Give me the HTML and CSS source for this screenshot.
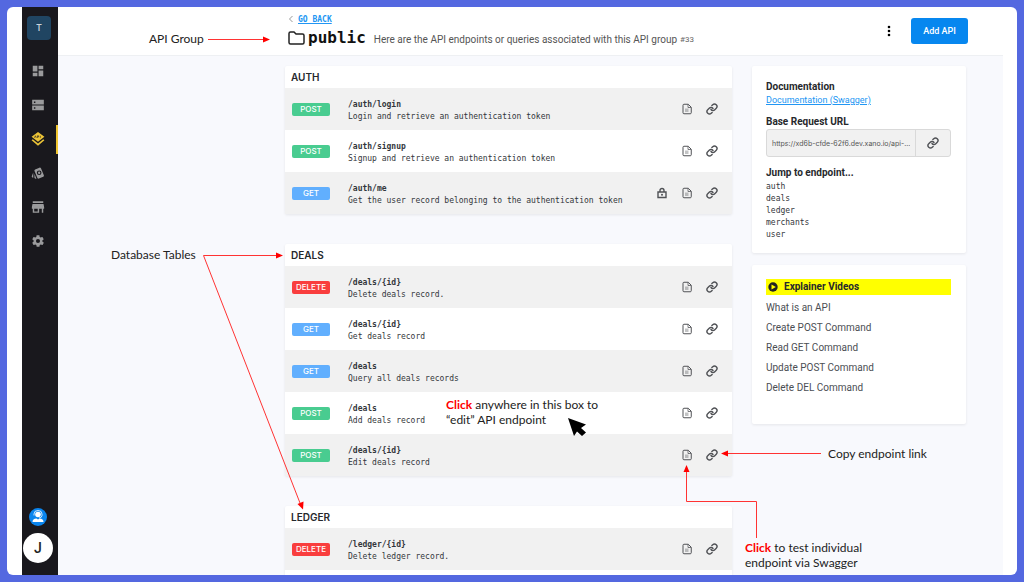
FILE: index.html
```html
<!DOCTYPE html>
<html lang="en">
<head>
  <meta charset="UTF-8">
  <title>API Group - public</title>
  <link rel="stylesheet" href="styles.css">
</head>
<body>

  <!-- shared icons -->
  <svg class="defs" width="0" height="0">
    <symbol id="doc" viewBox="0 0 24 24">
      <path d="M4 4.500Q4 2.500 6 2.500h8.500l6 6V19.500q0 2-2 2H6q-2 0-2-2z" fill="none" stroke="currentColor" stroke-width="2"/>
      <path d="M14 3v6h6" fill="none" stroke="currentColor" stroke-width="1.500"/>
      <path d="M8 11h7v7H8z" fill="currentColor" opacity="0.350"/>
    </symbol>
    <symbol id="link" viewBox="0 0 24 24">
      <g fill="none" stroke="currentColor" stroke-width="2.800" stroke-linecap="round" stroke-linejoin="round">
        <path d="M10 13a5 5 0 0 0 7.540.540l3-3a5 5 0 0 0-7.070-7.070l-1.720 1.710"/>
        <path d="M14 11a5 5 0 0 0-7.540-.540l-3 3a5 5 0 0 0 7.070 7.070l1.710-1.710"/>
      </g>
    </symbol>
    <symbol id="lock" viewBox="0 0 24 24">
      <path d="M4 10h16v11H4zM8 10V7a4 4 0 0 1 8 0v3" fill="none" stroke="currentColor" stroke-width="2.800"/>
      <circle cx="12" cy="15.500" r="2" fill="currentColor"/>
    </symbol>
  </svg>

  <div class="frame">
    <nav class="sidebar">
      <button class="workspace">T</button>
      <a class="nav-item" href="#" aria-label="Dashboard">
        <svg viewBox="0 0 24 24"><path d="M3 13h8V3H3v10zm0 8h8v-6H3v6zm10 0h8V11h-8v10zm0-18v6h8V3h-8z"/></svg>
      </a>
      <a class="nav-item" href="#" aria-label="Database">
        <svg viewBox="0 0 24 24"><path fill-rule="evenodd" d="M2 3h20v8H2zM2 13h20v8H2zM5 6v2.500h2.500V6zM5 16v2.500h2.500V16z"/></svg>
      </a>
      <a class="nav-item current" href="#" aria-label="API">
        <svg viewBox="0 0 24 24"><path d="M12 0L1 8l11 8.500L23 8zM3 12.500L1 14l11 9.500L23 14l-2-1.500-9 7z"/><path d="M6 10l1.500-3.500L9 10M11 10V6.500h2v2h-2M16 6.500V10" fill="none" stroke="#19181d"/></svg>
      </a>
      <a class="nav-item" href="#" aria-label="Library">
        <svg viewBox="0 0 24 24"><path d="M2.530 19.650l1.340.560v-9.030l-2.430 5.860c-.410 1.020.080 2.190 1.090 2.610zm19.500-3.700L17.070 3.980c-.310-.750-1.040-1.210-1.810-1.230-.260 0-.530.040-.790.150L7.100 5.950c-.750.310-1.210 1.030-1.230 1.800-.010.270.040.540.150.800l4.960 11.970c.310.760 1.050 1.220 1.830 1.230.260 0 .520-.050.770-.150l7.360-3.050c1.020-.420 1.510-1.590 1.090-2.600zM5.880 19.750c0 1.100.900 2 2 2h1.450l-3.450-8.340v6.340z"/><circle cx="14" cy="11.500" r="3" fill="none" stroke="#19181d" stroke-width="2"/></svg>
      </a>
      <a class="nav-item" href="#" aria-label="Marketplace">
        <svg viewBox="0 0 24 24"><path d="M21 2H3v3h18zM21.500 7h-19L1.500 12v3H3v7h11v-7h4.500v7h2.500v-7h1.500v-3zM5.500 19.500V15h6v4.500z"/></svg>
      </a>
      <a class="nav-item" href="#" aria-label="Settings">
        <svg viewBox="0 0 24 24"><path fill-rule="evenodd" d="M19.400 13c0-.300.100-.600.100-1s0-.700-.100-1l2.100-1.700c.200-.100.300-.400.100-.600l-2-3.500c-.100-.200-.400-.300-.600-.200l-2.500 1c-.500-.400-1.100-.700-1.700-1L14.500 2.400c0-.200-.200-.400-.500-.400h-4c-.200 0-.500.200-.500.400L9.100 5c-.600.300-1.200.600-1.700 1L5 5c-.200-.100-.500 0-.600.200l-2 3.500c-.100.200-.100.500.100.600L4.600 11c0 .300-.100.700-.100 1s0 .700.100 1l-2.100 1.700c-.200.100-.200.400-.100.600l2 3.500c.100.200.400.300.600.200l2.500-1c.500.400 1.100.700 1.700 1l.400 2.600c0 .200.200.400.500.400h4c.200 0 .500-.200.500-.400l.400-2.600c.600-.300 1.200-.600 1.700-1l2.500 1c.200.100.500 0 .600-.200l2-3.500c.100-.200.100-.500-.100-.600zM12 15.500a3.500 3.500 0 1 1 0-7 3.500 3.500 0 0 1 0 7z"/></svg>
      </a>
      <button class="support" aria-label="Support">
        <svg viewBox="0 0 18 18"><circle cx="9" cy="6.500" r="2.800" fill="#fff"/><path d="M5 7.500V6a4 3.500 0 0 1 8 0v1.500a3 3 0 0 1-3 2.500" fill="none" stroke="#fff" stroke-width="0.800"/><path d="M3.500 14q0-3.500 4-3.500L9 11.500l1.500-1q4 0 4 3.500z" fill="#fff"/></svg>
      </button>
      <button class="avatar">J</button>
    </nav>

    <main class="main">
      <header class="header">
        <div class="heading">
          <div class="back">
            <svg viewBox="0 0 6 8"><path d="M4.500 1L1.500 4l3 3" fill="none" stroke="#999"/></svg>
            <a href="#">GO BACK</a>
          </div>
          <div class="title-row">
            <svg class="folder" viewBox="0 0 17 14"><path d="M1 2.500Q1 1 2.500 1H6l2 2h6.500Q16 3 16 4.500v7q0 1.500-1.500 1.500h-12Q1 13 1 11.500z" fill="none" stroke="#222" stroke-width="1.500"/></svg>
            <h1>public</h1>
            <p>Here are the API endpoints or queries associated with this API group</p>
            <span class="group-id">#33</span>
          </div>
        </div>
        <button class="more" aria-label="More">
          <svg viewBox="0 0 4 12"><circle cx="2" cy="2" r="1.300"/><circle cx="2" cy="6" r="1.300"/><circle cx="2" cy="10" r="1.300"/></svg>
        </button>
        <button class="add-btn">Add API</button>
      </header>

      <div class="content">
        <div class="groups">
          <section class="card group">
            <h2>AUTH</h2>
            <div class="row">
              <span class="badge post">POST</span>
              <div class="info"><b>/auth/login</b><span>Login and retrieve an authentication token</span></div>
              <button class="icon-btn" aria-label="Docs"><svg><use href="#doc"/></svg></button>
              <button class="icon-btn" aria-label="Copy link"><svg><use href="#link"/></svg></button>
            </div>
            <div class="row">
              <span class="badge post">POST</span>
              <div class="info"><b>/auth/signup</b><span>Signup and retrieve an authentication token</span></div>
              <button class="icon-btn" aria-label="Docs"><svg><use href="#doc"/></svg></button>
              <button class="icon-btn" aria-label="Copy link"><svg><use href="#link"/></svg></button>
            </div>
            <div class="row">
              <span class="badge get">GET</span>
              <div class="info"><b>/auth/me</b><span>Get the user record belonging to the authentication token</span></div>
              <button class="icon-btn" aria-label="Private"><svg><use href="#lock"/></svg></button>
              <button class="icon-btn" aria-label="Docs"><svg><use href="#doc"/></svg></button>
              <button class="icon-btn" aria-label="Copy link"><svg><use href="#link"/></svg></button>
            </div>
          </section>

          <section class="card group">
            <h2>DEALS</h2>
            <div class="row">
              <span class="badge delete">DELETE</span>
              <div class="info"><b>/deals/{id}</b><span>Delete deals record.</span></div>
              <button class="icon-btn" aria-label="Docs"><svg><use href="#doc"/></svg></button>
              <button class="icon-btn" aria-label="Copy link"><svg><use href="#link"/></svg></button>
            </div>
            <div class="row">
              <span class="badge get">GET</span>
              <div class="info"><b>/deals/{id}</b><span>Get deals record</span></div>
              <button class="icon-btn" aria-label="Docs"><svg><use href="#doc"/></svg></button>
              <button class="icon-btn" aria-label="Copy link"><svg><use href="#link"/></svg></button>
            </div>
            <div class="row">
              <span class="badge get">GET</span>
              <div class="info"><b>/deals</b><span>Query all deals records</span></div>
              <button class="icon-btn" aria-label="Docs"><svg><use href="#doc"/></svg></button>
              <button class="icon-btn" aria-label="Copy link"><svg><use href="#link"/></svg></button>
            </div>
            <div class="row">
              <span class="badge post">POST</span>
              <div class="info"><b>/deals</b><span>Add deals record</span></div>
              <button class="icon-btn" aria-label="Docs"><svg><use href="#doc"/></svg></button>
              <button class="icon-btn" aria-label="Copy link"><svg><use href="#link"/></svg></button>
            </div>
            <div class="row">
              <span class="badge post">POST</span>
              <div class="info"><b>/deals/{id}</b><span>Edit deals record</span></div>
              <button class="icon-btn" aria-label="Docs"><svg><use href="#doc"/></svg></button>
              <button class="icon-btn" aria-label="Copy link"><svg><use href="#link"/></svg></button>
            </div>
          </section>

          <section class="card group">
            <h2>LEDGER</h2>
            <div class="row">
              <span class="badge delete">DELETE</span>
              <div class="info"><b>/ledger/{id}</b><span>Delete ledger record.</span></div>
              <button class="icon-btn" aria-label="Docs"><svg><use href="#doc"/></svg></button>
              <button class="icon-btn" aria-label="Copy link"><svg><use href="#link"/></svg></button>
            </div>
            <div class="row"></div>
          </section>
        </div>

        <aside class="side">
          <section class="card docs">
            <h3>Documentation</h3>
            <a class="swagger" href="#">Documentation (Swagger)</a>
            <label class="side-title" for="baseUrl">Base Request URL</label>
            <div class="url-box">
              <input id="baseUrl" type="text" value="https://xd6b-cfde-62f6.dev.xano.io/api-..." readonly>
              <button aria-label="Copy URL"><svg><use href="#link"/></svg></button>
            </div>
            <h3>Jump to endpoint...</h3>
            <ul class="jump">
              <li><a href="#">auth</a></li>
              <li><a href="#">deals</a></li>
              <li><a href="#">ledger</a></li>
              <li><a href="#">merchants</a></li>
              <li><a href="#">user</a></li>
            </ul>
          </section>

          <section class="card videos">
            <h3>
              <svg viewBox="0 0 10 10"><circle cx="5" cy="5" r="4.700" fill="#222"/><path d="M3.500 2.500v5L7.800 5z" fill="#ff0"/></svg>
              Explainer Videos
            </h3>
            <ul>
              <li><a href="#">What is an API</a></li>
              <li><a href="#">Create POST Command</a></li>
              <li><a href="#">Read GET Command</a></li>
              <li><a href="#">Update POST Command</a></li>
              <li><a href="#">Delete DEL Command</a></li>
            </ul>
          </section>
        </aside>
      </div>
    </main>
  </div>

  <!-- callouts drawn over the app -->
  <div class="notes">
    <svg class="arrows" width="1024" height="582" viewBox="0 0 1024 582">
      <g fill="none" stroke="#f33">
        <path d="M208 39.500H264"/>
        <path d="M277 255.500H203.500L300 503"/>
        <path d="M821 453.500H727"/>
        <path d="M756.500 538V501.500H686.500V471"/>
      </g>
      <g fill="#f00">
        <path d="M270 39.500l-7-3v6z"/>
        <path d="M283 255.500l-7-3v6z"/>
        <path d="M303 509.500l-5.500-5.500 6-2.500z"/>
        <path d="M721 453.500l7-3v6z"/>
        <path d="M686.500 465l-3 7h6z"/>
      </g>
      <path d="M568 418l18 6.500-5 3.500 5 4.500-4 3.500-5-4.500-3 4.500z" fill="#000"/>
    </svg>
    <p class="note note-group">API Group</p>
    <p class="note note-tables">Database Tables</p>
    <p class="note note-edit"><b>Click</b> anywhere in this box to<br>“edit” API endpoint</p>
    <p class="note note-copy">Copy endpoint link</p>
    <p class="note note-test"><b>Click</b> to test individual<br>endpoint via Swagger</p>
  </div>

</body>
</html>
```

FILE: styles.css
```css
* {
  box-sizing: border-box;
}

body {
  margin: 0;
  height: 100vh;
  padding: 7px;
  overflow: hidden;
  background: #5468e0;
  color: #33363b;
  font-family: Roboto, sans-serif;
  font-size: 10px;
}

h1, h2, h3, p, ul {
  margin: 0;
  padding: 0;
}

ul {
  list-style: none;
}

a {
  color: inherit;
  text-decoration: none;
}

button {
  padding: 0;
  border: none;
  background: none;
  color: inherit;
  font-family: inherit;
  cursor: pointer;
}

svg {
  display: block;
}

.defs {
  position: absolute;
}

.frame {
  display: flex;
  height: 100%;
  padding: 0 14px 0 15px;
  background: #fff;
  border-radius: 6px;
  overflow: hidden;
}

/* sidebar */
.sidebar {
  display: flex;
  flex-direction: column;
  align-items: center;
  width: 36px;
  flex-shrink: 0;
  padding: 9px 0 12px;
  background: #19181d;
}

.workspace {
  width: 24px;
  height: 24px;
  margin: 0 2px 14px 0;
  border-radius: 4px;
  background: #204562;
  color: #c9d4dd;
  font-size: 9px;
  font-weight: 500;
}

.nav-item {
  display: flex;
  align-items: center;
  justify-content: center;
  width: 100%;
  height: 34px;
  padding-right: 4px;
}

.nav-item svg {
  width: 14px;
  height: 14px;
  fill: #9a9a9c;
}

.nav-item.current {
  background: linear-gradient(#f0c52f, #f0c52f) right center / 2px 29px no-repeat;
}

.nav-item.current svg {
  fill: #ecc437;
}

.support {
  width: 18px;
  height: 18px;
  margin: auto 4px 7px 0;
  border-radius: 50%;
  background: #0a85ee;
}

.avatar {
  width: 30px;
  height: 30px;
  margin-right: 4px;
  border-radius: 50%;
  background: #fff;
  color: #222;
  font-size: 14px;
  font-weight: 500;
}

/* header */
.main {
  flex: 1;
  min-width: 0;
  background: #f8f9fd;
}

.header {
  display: flex;
  height: 49px;
  padding: 0 35px 0 230px;
  background: #fff;
  border-bottom: 1px solid #eef0f3;
}

.heading {
  flex: 1;
  padding-top: 6px;
}

.back {
  display: flex;
  align-items: center;
  gap: 4px;
  height: 12px;
}

.back svg {
  width: 6px;
  height: 8px;
}

.back a {
  color: #2196f3;
  font-family: "DejaVu Sans Mono", monospace;
  font-size: 8px;
  font-weight: bold;
  text-decoration: underline;
}

.title-row {
  display: flex;
  align-items: center;
  height: 25px;
  white-space: nowrap;
}

.folder {
  width: 17px;
  height: 14px;
  margin-right: 3px;
}

.title-row h1 {
  color: #111;
  font-family: "DejaVu Sans Mono", monospace;
  font-size: 16px;
  line-height: 24px;
}

.title-row p {
  margin-left: 8px;
  padding-top: 4px;
  color: #555;
}

.group-id {
  margin-left: 3px;
  padding-top: 4px;
  color: #666;
  font-size: 8px;
}

.more {
  width: 12px;
  margin-right: 16px;
}

.more svg {
  width: 4px;
  height: 12px;
  margin: auto;
}

.add-btn {
  width: 57px;
  height: 26px;
  margin-top: 11px;
  border-radius: 3px;
  background: #0787ef;
  color: #fff;
  font-size: 9px;
  font-weight: 500;
}

/* content */
.content {
  display: grid;
  grid-template-columns: 1fr 214px;
  align-items: start;
  gap: 20px;
  padding: 10px 37px 0 227px;
}

.card {
  background: #fff;
  border-radius: 2px;
  box-shadow: 0 1px 3px rgba(0, 0, 0, 0.08);
}

.groups {
  display: grid;
  gap: 30px;
}

.group h2 {
  padding-left: 6px;
  color: #26282c;
  font-family: Inter, sans-serif;
  font-size: 10px;
  font-weight: 600;
  line-height: 22px;
}

.row {
  display: flex;
  align-items: center;
  gap: 13px;
  height: 42px;
  padding: 0 14px 0 7px;
}

.row:nth-of-type(odd) {
  background: #f1f1f1;
}

.badge {
  width: 38px;
  border-radius: 2px;
  color: #fff;
  font-family: Inter, sans-serif;
  font-size: 8px;
  font-weight: 500;
  line-height: 13px;
  text-align: center;
}

.post {
  background: #49cc90;
}

.get {
  background: #61affe;
}

.delete {
  background: #f93e3e;
}

.info {
  display: flex;
  flex-direction: column;
  flex: 1;
  padding: 4px 0 0 5px;
  font-family: "DejaVu Sans Mono", monospace;
  font-size: 8px;
  line-height: 12px;
}

.icon-btn svg,
.url-box svg {
  width: 12px;
  height: 12px;
  color: #505256;
}

/* right column */
.side {
  display: grid;
  gap: 12px;
}

.side h3,
.side-title {
  display: block;
  color: #26282c;
  font-size: 10px;
  font-weight: 700;
  line-height: 14px;
}

.docs {
  padding: 14px 15px 12px 14px;
}

.swagger {
  display: block;
  margin-bottom: 8px;
  color: #2196f3;
  font-size: 9px;
  line-height: 13px;
  text-decoration: underline;
}

.url-box {
  display: flex;
  height: 28px;
  margin-bottom: 9px;
  border: 1px solid #d9d9d9;
  border-radius: 3px;
  background: #f1f1f1;
}

.url-box input {
  flex: 1;
  min-width: 0;
  padding: 0 5px;
  border: none;
  background: none;
  color: #555;
  font-family: Inter, sans-serif;
  font-size: 7px;
}

.url-box button {
  display: flex;
  align-items: center;
  justify-content: center;
  width: 35px;
  border-left: 1px solid #d9d9d9;
}

.jump {
  padding-top: 1px;
  font-family: "DejaVu Sans Mono", monospace;
  font-size: 8px;
  line-height: 12px;
}

.videos {
  padding: 14px 15px 26px 14px;
}

.videos h3 {
  display: flex;
  align-items: center;
  gap: 6px;
  margin-bottom: 3px;
  padding-left: 2px;
  background: #ff0;
  line-height: 16px;
}

.videos h3 svg {
  width: 10px;
  height: 10px;
}

.videos ul {
  color: #4b4e53;
  font-size: 10px;
  line-height: 20px;
}

/* callouts */
.notes {
  position: absolute;
  inset: 0;
  pointer-events: none;
}

.arrows {
  position: absolute;
  top: 0;
  left: 0;
}

.note {
  position: absolute;
  color: #222;
  font-family: Lato, sans-serif;
  font-size: 12px;
  line-height: 15px;
  white-space: nowrap;
}

.note b {
  color: #f00;
}

.note-group {
  top: 31px;
  left: 149px;
}

.note-tables {
  top: 247px;
  left: 111px;
}

.note-edit {
  top: 397px;
  left: 446px;
}

.note-copy {
  top: 446px;
  left: 828px;
}

.note-test {
  top: 540px;
  left: 745px;
}
```
